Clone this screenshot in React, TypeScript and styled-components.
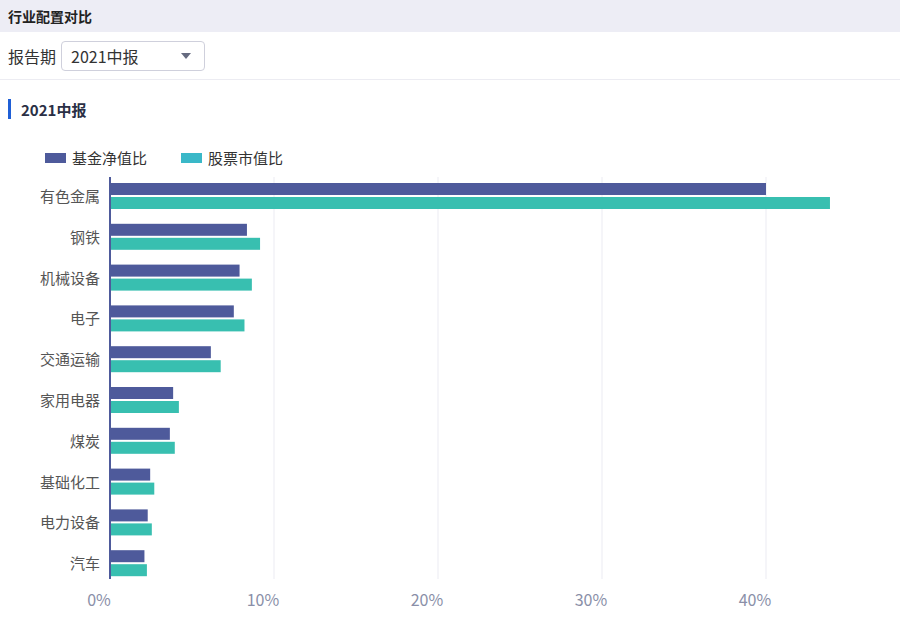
import styled, { createGlobalStyle } from 'styled-components';

const GlobalStyle = createGlobalStyle`
  body { margin: 0; background: #fff; font-family: "Noto Sans CJK SC", "Liberation Sans", sans-serif; }
`;

const data = [
  { name: '有色金属', fund: 40.0, stock: 43.9 },
  { name: '钢铁', fund: 8.35, stock: 9.15 },
  { name: '机械设备', fund: 7.9, stock: 8.65 },
  { name: '电子', fund: 7.55, stock: 8.2 },
  { name: '交通运输', fund: 6.15, stock: 6.75 },
  { name: '家用电器', fund: 3.85, stock: 4.2 },
  { name: '煤炭', fund: 3.65, stock: 3.95 },
  { name: '基础化工', fund: 2.45, stock: 2.7 },
  { name: '电力设备', fund: 2.3, stock: 2.55 },
  { name: '汽车', fund: 2.1, stock: 2.25 },
];

const X0 = 110;
const PX = 16.4;
const TOP = 178;
const BAND = 40.8;

const Chart = () => (
  <ChartSvg width="900" height="490" viewBox="0 132 900 490">
    <rect x="45" y="154" width="21" height="10" fill="#4e5a9b" />
    <text x="72" y="165" fontSize="15" fill="#333">基金净值比</text>
    <rect x="181" y="154" width="21" height="10" fill="#3ab8c8" />
    <text x="208" y="165" fontSize="15" fill="#333">股票市值比</text>
    {[10, 20, 30, 40].map((v) => (
      <line key={v} x1={X0 + v * PX} x2={X0 + v * PX} y1={TOP} y2={580} stroke="#ebebf2" />
    ))}
    {[0, 10, 20, 30, 40].map((v) => (
      <text key={v} x={X0 + v * PX - 11} y={607} fontSize="16" fill="#8a8fa8" textAnchor="middle">{v}%</text>
    ))}
    {data.map((d, i) => {
      const y = TOP + i * BAND;
      return (
        <g key={d.name}>
          <text x="100" y={y + 25} fontSize="15" fill="#555" textAnchor="end">{d.name}</text>
          <rect x={X0} y={y + 6} width={d.fund * PX} height={12} fill="#4e5a9b" />
          <rect x={X0} y={y + 20} width={d.stock * PX} height={12} fill="#38bfb0" />
        </g>
      );
    })}
    <line x1={X0} x2={X0} y1={TOP} y2={580} stroke="#4e5a9b" strokeWidth="2" />
  </ChartSvg>
);

const App = () => (
  <>
    <GlobalStyle />
    <Header>行业配置对比</Header>
    <FilterRow>
      <Label>报告期</Label>
      <Select>
        2021中报
        <Caret />
      </Select>
    </FilterRow>
    <SectionTitle>2021中报</SectionTitle>
    <Chart />
  </>
);

const ChartSvg = styled.svg`
  display: block;
  margin-top: 12px;
`;

const Header = styled.div`
  height: 32px;
  background: #ededf5;
  display: flex;
  align-items: center;
  padding-left: 8px;
  font-size: 14px;
  font-weight: bold;
  color: #222;
`;

const FilterRow = styled.div`
  height: 47px;
  display: flex;
  align-items: center;
  padding-left: 8px;
  gap: 5px;
  border-bottom: 1px solid #ececf2;
`;

const Label = styled.span`
  font-size: 16px;
  color: #333;
`;

const Select = styled.div`
  width: 144px;
  height: 30px;
  border: 1px solid #cfd0dc;
  border-radius: 4px;
  display: flex;
  align-items: center;
  justify-content: space-between;
  padding: 0 13px 0 9px;
  font-size: 16px;
  color: #333;
  box-sizing: border-box;
`;

const Caret = styled.span`
  width: 0;
  height: 0;
  border-left: 5px solid transparent;
  border-right: 5px solid transparent;
  border-top: 6px solid #666b80;
`;

const SectionTitle = styled.div`
  margin: 19px 0 0 8px;
  height: 20px;
  display: flex;
  align-items: center;
  border-left: 3px solid #1f5fd6;
  padding-left: 10px;
  font-size: 15px;
  font-weight: bold;
  color: #2a2f45;
`;

export default App;
